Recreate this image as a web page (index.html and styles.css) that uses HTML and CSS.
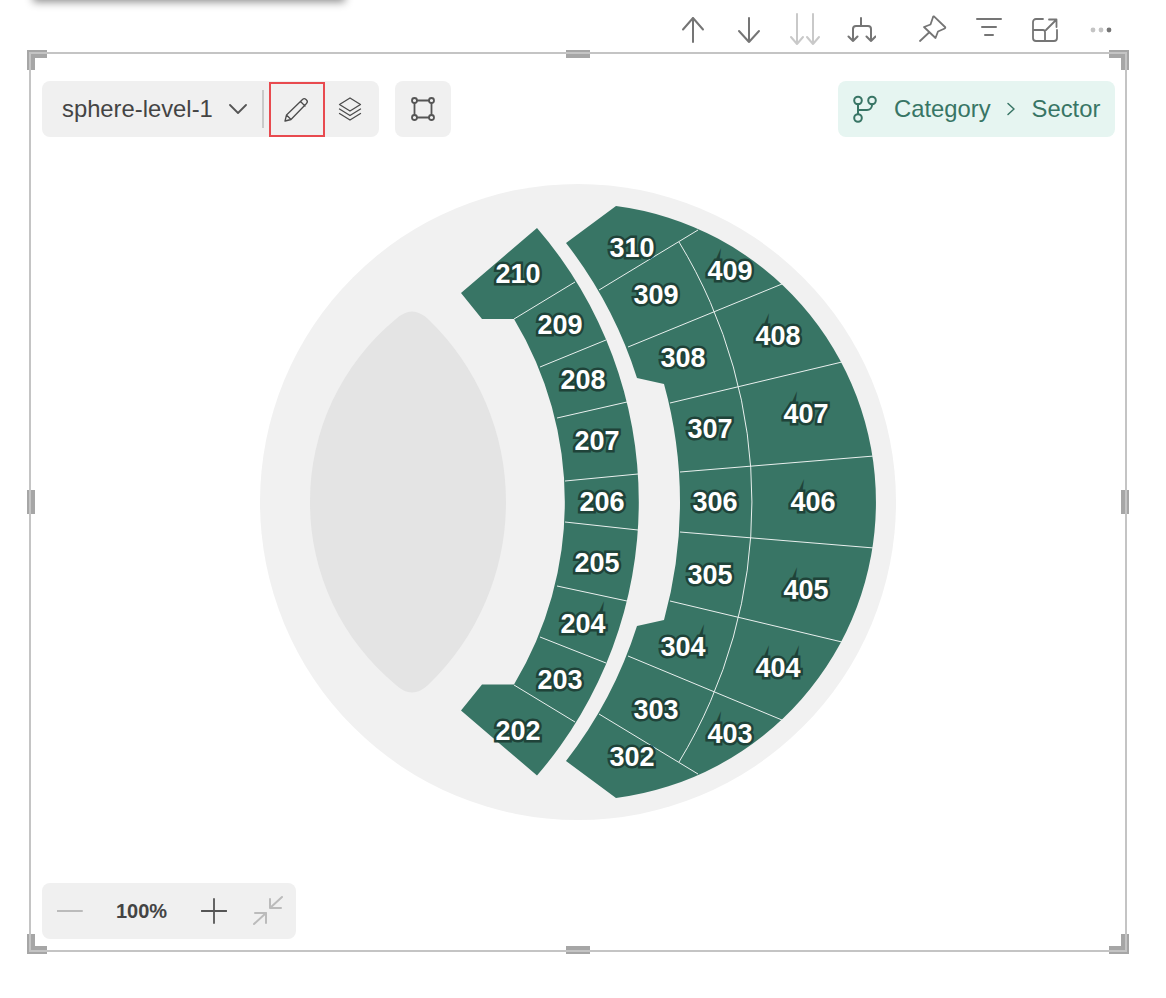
FILE: index.html
```html
<!DOCTYPE html>
<html lang="en">
<head>
<meta charset="utf-8">
<title>sphere-level-1</title>
<link rel="stylesheet" href="styles.css">
</head>
<body>
<div class="popup-shadow"></div>
<header class="toolbar">
  <button class="tool"><svg width="26" height="30" viewBox="0 0 26 30"><path class="ic" d="M13 3v24M3 14.500 13 3l10 11.500"/></svg></button>
  <button class="tool"><svg width="26" height="30" viewBox="0 0 26 30"><path class="ic" d="M13 3v24M3 16l10 11 10-11"/></svg></button>
  <button class="tool"><svg width="34" height="34" viewBox="0 0 34 34"><path class="ic ic-off" d="M9 1v30M3 24l6 7 6-7M25 1v30M19 24l6 7 6-7"/></svg></button>
  <button class="tool"><svg width="30" height="30" viewBox="0 0 30 30"><path class="ic" d="M15 3v8M7 26V14a3 3 0 0 1 3-3h12a3 3 0 0 1 3 3v12M2.500 21.500 7 26l4.500-4.500M20.500 21.500 25 26l4.500-4.500"/></svg></button>
  <button class="tool tool-gap"><svg width="28" height="30" viewBox="0 0 28 30"><path class="ic ic-pin" d="M15.500 1.800 26 12a.9.900 0 0 1-.3 1.500L19 16.500l-2.500 6.500L5 12l6.500-2.500 2.500-7.300a.8.800 0 0 1 1.500-.4ZM9.500 18 1 26"/></svg></button>
  <button class="tool"><svg width="28" height="30" viewBox="0 0 28 30"><path class="ic" d="M2 4h24M7 12h14M10 20h8"/></svg></button>
  <button class="tool"><svg width="28" height="30" viewBox="0 0 28 30"><path class="ic ic-pin" d="M12 4H5a3 3 0 0 0-3 3v16a3 3 0 0 0 3 3h18a3 3 0 0 0 3-3v-8M2 15h10a2 2 0 0 1 2 2v9M15 15 25 5M18 4.500h7.500V12"/></svg></button>
  <button class="tool"><svg width="24" height="10" viewBox="0 0 24 10"><circle class="dot" cx="4" cy="5" r="2.400"/><circle class="dot" cx="12" cy="5" r="2.400"/><circle class="dot dot-on" cx="20" cy="5" r="2.400"/></svg></button>
</header>

<main class="frame">
  <i class="handle corner tl"></i><i class="handle corner tr"></i><i class="handle corner bl"></i><i class="handle corner br"></i>
  <i class="handle edge-h top"></i><i class="handle edge-h bottom"></i><i class="handle edge-v left"></i><i class="handle edge-v right"></i>

  <svg class="chart" viewBox="31 54 1094 896" width="1094" height="896">
    <circle class="plate" cx="578" cy="502" r="318"/>
    <path class="lens" d="M396 319Q412 304 428 319A254 254 0 0 1 506 502A254 254 0 0 1 428 685Q412 700 396 685A236 236 0 0 1 310 502A236 236 0 0 1 396 319Z"/>
    <path class="block" d="M537 228A419 419 0 0 1 537 775.500L461 710.500 482 684.500H514A354 354 0 0 0 514 319H482L461 293Z"/>
    <path class="block" d="M566 243 616 206A298.500 298.500 0 0 1 616 798L566 761A434 434 0 0 0 637 626L664 620A443 443 0 0 0 664 384L637 378A434 434 0 0 0 566 243Z"/>
    <path class="seam" d="M514 319 575 282M540 367 606 340M557 418 627 402M565 481 638 474M565 522 638 530M557 586 627 601M540 637 606 663M514 685 575 722"/>
    <path class="seam" d="M599 290 698 230M628 347 782 284M670 403 842 362M680 472 874 456M680 532 874 548M670 601 842 642M628 656 782 720M599 714 698 774"/>
    <path class="seam" d="M679 242A500 500 0 0 1 679 762"/>
    <g class="labels">
      <text x="518" y="274">210</text><text x="560" y="325">209</text><text x="583" y="380">208</text><text x="597" y="441">207</text><text x="602" y="502">206</text><text x="597" y="563">205</text><text x="583" y="624">204</text><text x="560" y="680">203</text><text x="518" y="731">202</text>
      <text x="632" y="248">310</text><text x="656" y="295">309</text><text x="683" y="358">308</text><text x="710" y="429">307</text><text x="715" y="502">306</text><text x="710" y="575">305</text><text x="683" y="647">304</text><text x="656" y="710">303</text><text x="632" y="757">302</text>
      <text x="730" y="271">409</text><text x="778" y="336">408</text><text x="806" y="414">407</text><text x="813" y="502">406</text><text x="806" y="590">405</text><text x="778" y="668">404</text><text x="730" y="734">403</text>
    </g>
  </svg>

  <div class="controls">
    <div class="panel level">
      <span class="level-name">sphere-level-1</span>
      <svg class="chevron" width="18" height="10" viewBox="0 0 18 10"><path class="ic-dark" d="M1 1l8 8 8-8"/></svg>
      <span class="sep"></span>
      <button class="pbtn pbtn-active"><svg width="28" height="28" viewBox="0 0 28 28"><path class="ic-thin" d="M2 25l1.500-6L19.500 3.500a2.500 2.500 0 0 1 3.500 0l.5.5a2.500 2.500 0 0 1 0 3.500L8 23.500ZM3.500 19 8 23.500M17.500 5.500l4.500 4.500"/></svg></button>
      <button class="pbtn pbtn-layers"><svg width="24" height="26" viewBox="0 0 24 26"><path class="ic-thin" d="M12 2l10.500 6.500L12 15 1.500 8.500ZM1.500 13 12 19.500 22.500 13M1.500 17.500 12 24l10.500-6.500"/></svg></button>
    </div>
    <button class="panel square"><svg width="26" height="26" viewBox="0 0 26 26"><path class="ic-dark" d="M7 4.500h12M7 21.500h12M4.500 7v12M21.500 7v12"/><circle class="ic-dark" cx="4.500" cy="4.500" r="2.500"/><circle class="ic-dark" cx="21.500" cy="4.500" r="2.500"/><circle class="ic-dark" cx="4.500" cy="21.500" r="2.500"/><circle class="ic-dark" cx="21.500" cy="21.500" r="2.500"/></svg></button>
    <div class="chip">
      <svg width="26" height="28" viewBox="0 0 26 28"><path class="ic-green" d="M6 9v10M20 9v1a5 5 0 0 1-5 5H6"/><circle class="ic-green" cx="6" cy="5.500" r="3.800"/><circle class="ic-green" cx="20" cy="5.500" r="3.800"/><circle class="ic-green" cx="6" cy="23" r="3.800"/></svg>
      <span class="chip-text chip-first">Category</span>
      <svg class="chip-sep" width="10" height="14" viewBox="0 0 10 14"><path class="ic-green-thin" d="M2 1.500l6 5.500-6 5.500"/></svg>
      <span class="chip-text">Sector</span>
    </div>
  </div>

  <div class="panel zoom">
    <svg width="26" height="4" viewBox="0 0 26 4"><path class="ic-mute" d="M0 2h25"/></svg>
    <span class="zoom-value">100%</span>
    <svg class="zoom-plus" width="26" height="26" viewBox="0 0 26 26"><path class="ic-dark" d="M0.500 13h25M13 1v24"/></svg>
    <svg class="zoom-fit" width="30" height="30" viewBox="0 0 30 30"><path class="ic-mute" d="M29 1 17 12M17 3v9h11M1 28l12-11M2 17h11v10"/></svg>
  </div>
</main>
</body>
</html>
```
FILE: styles.css
```css
* { box-sizing: border-box; }
html, body { margin: 0; padding: 0; background: #fff; }
body {
  width: 1166px;
  height: 998px;
  overflow: hidden;
  position: relative;
  font-family: "Liberation Sans", Arial, sans-serif;
}
button { border: 0; background: none; padding: 0; margin: 0; display: flex; align-items: center; justify-content: center; }

.popup-shadow {
  position: absolute;
  left: 33px;
  top: -20px;
  width: 312px;
  height: 20px;
  background: #fff;
  box-shadow: 0 2px 8px rgba(0, 0, 0, .45);
}

.toolbar {
  height: 52px;
  padding: 8px 37px 0 0;
  display: flex;
  justify-content: flex-end;
}
.tool { width: 56px; height: 44px; }
.tool-gap { margin-left: 16px; }

.ic, .ic-dark, .ic-thin, .ic-mute, .ic-green, .ic-green-thin { fill: none; stroke-linecap: round; stroke-linejoin: round; }
.ic { stroke: #757575; stroke-width: 2; }
.ic-off { stroke: #c9c9c9; }
.ic-pin { stroke-width: 1.800; }
.dot { fill: #c4c4c4; }
.dot-on { fill: #757575; }
.ic-dark { stroke: #555; stroke-width: 1.800; }
.ic-thin { stroke: #4c4c4c; stroke-width: 1.300; }
.ic-mute { stroke: #bbb; stroke-width: 2; }
.ic-green { stroke: #387565; stroke-width: 2; }
.ic-green-thin { stroke: #387565; stroke-width: 1.500; }

.frame {
  position: relative;
  margin-left: 29px;
  width: 1098px;
  height: 900px;
  padding: 2px;
}
.frame::after {
  content: "";
  position: absolute;
  inset: 0;
  border: 2px solid #c4c4c4;
  pointer-events: none;
}
.chart { display: block; }

.handle { position: absolute; display: block; }
.corner { width: 20px; height: 20px; }
.tl { left: -2px; top: -2px; border-left: 8px solid #a6a6a6; border-top: 8px solid #a6a6a6; }
.tr { right: -2px; top: -2px; border-right: 8px solid #a6a6a6; border-top: 8px solid #a6a6a6; }
.bl { left: -2px; bottom: -2px; border-left: 8px solid #a6a6a6; border-bottom: 8px solid #a6a6a6; }
.br { right: -2px; bottom: -2px; border-right: 8px solid #a6a6a6; border-bottom: 8px solid #a6a6a6; }
.edge-h { width: 24px; height: 8px; left: 537px; background: #a6a6a6; }
.edge-h.top { top: -2px; }
.edge-h.bottom { bottom: -2px; }
.edge-v { width: 8px; height: 24px; top: 438px; background: #a6a6a6; }
.edge-v.left { left: -2px; }
.edge-v.right { right: -2px; }

.plate { fill: #f1f1f1; }
.lens { fill: #e4e4e4; }
.block { fill: #387565; }
.seam { fill: none; stroke: #e9f0ee; stroke-width: 1; }
.labels text {
  font: bold 27px "Liberation Sans", Arial, sans-serif;
  text-anchor: middle;
  dominant-baseline: central;
  fill: #fff;
  stroke: #1f4339;
  stroke-width: 5px;
  stroke-miterlimit: 10;
  paint-order: stroke;
}

.controls {
  position: absolute;
  left: 13px;
  right: 12px;
  top: 29px;
  display: flex;
  gap: 16px;
}
.panel { background: #f0f0f0; border-radius: 8px; height: 56px; }
.level { width: 337px; display: flex; align-items: center; padding-left: 20px; }
.level-name { font-size: 23.800px; color: #444; width: 150px; white-space: nowrap; }
.chevron { margin-left: 17px; }
.sep { width: 2px; height: 38px; background: #c9c9c9; margin-left: 15px; margin-right: 5px; }
.pbtn { height: 56px; }
.pbtn-active { width: 56px; height: 55px; border: 2px solid #e84a4f; margin-top: 1px; }
.pbtn-layers { width: 24px; margin-left: 13px; }
.square { width: 56px; }
.chip {
  margin-left: auto;
  width: 277px;
  height: 56px;
  background: #e6f5f1;
  border-radius: 8px;
  display: flex;
  align-items: center;
  padding-left: 14px;
}
.chip-text { font-size: 23.800px; color: #387565; white-space: nowrap; }
.chip-first { margin-left: 16px; }
.chip-sep { margin: 0 16px 0 15px; }

.zoom {
  position: absolute;
  left: 13px;
  bottom: 13px;
  width: 254px;
  display: flex;
  align-items: center;
  padding-left: 15px;
}
.zoom-value { font-size: 20px; font-weight: bold; color: #444; margin-left: 33px; }
.zoom-plus { margin-left: 34px; }
.zoom-fit { margin-left: 26px; }
```
